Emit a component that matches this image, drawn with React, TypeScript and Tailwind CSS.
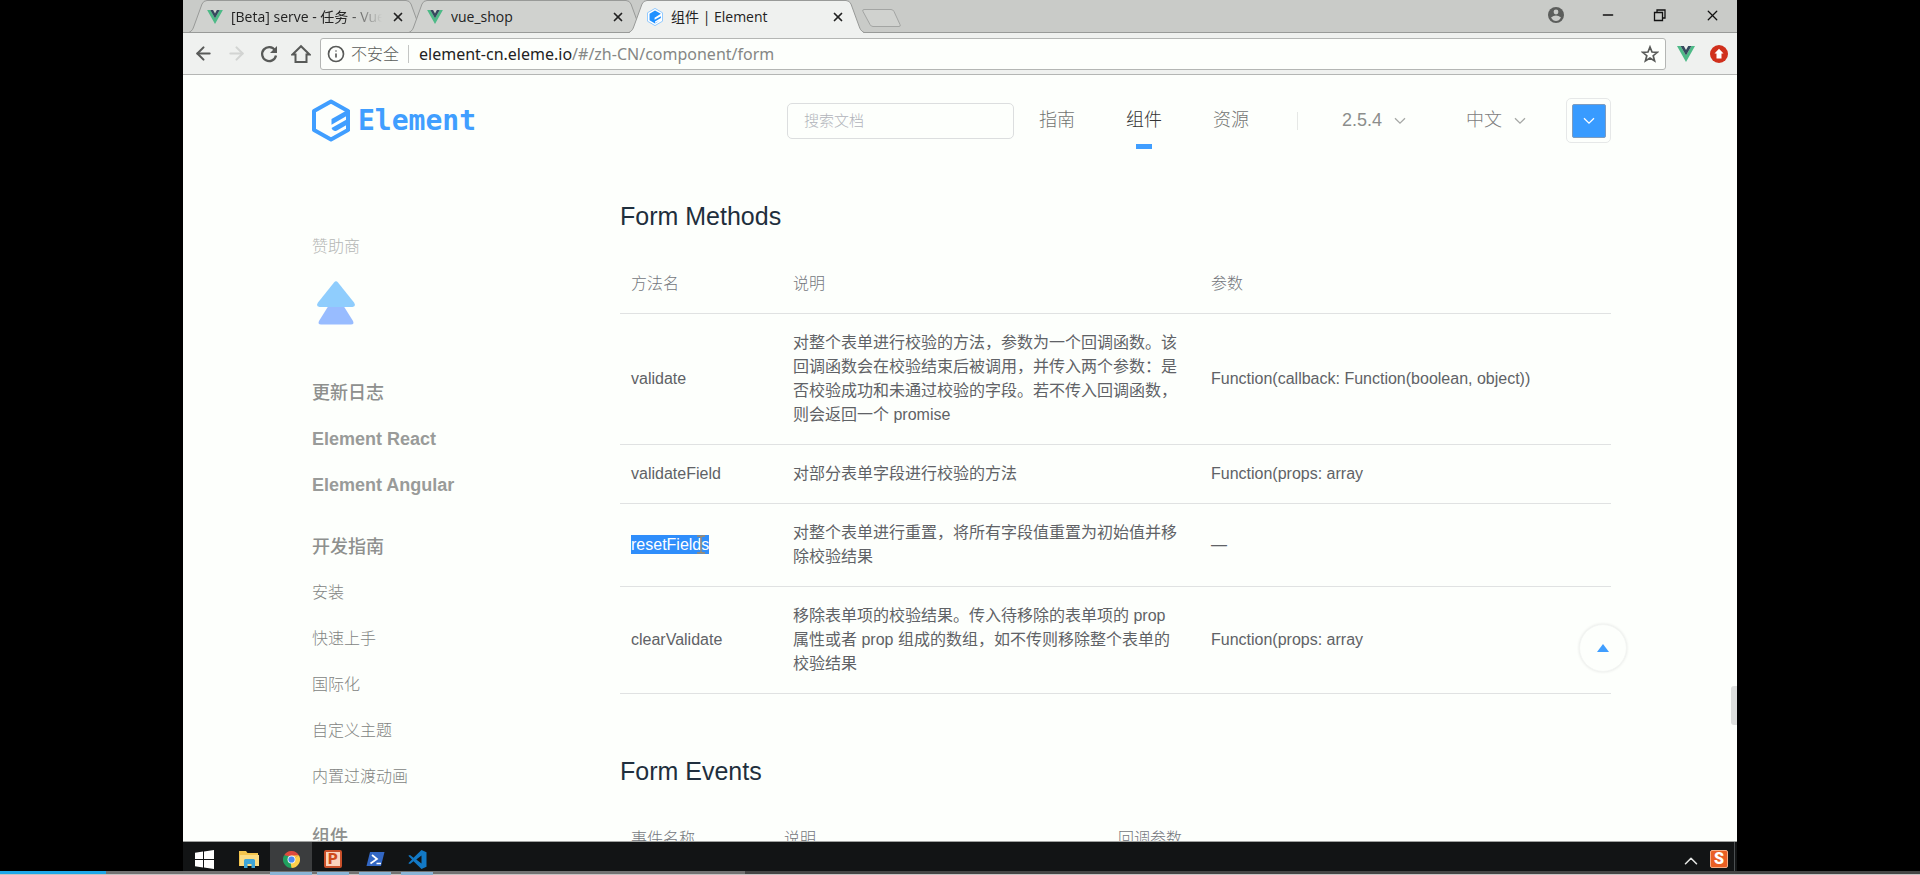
import type { ReactNode } from 'react';
import { ArrowLeft, ArrowRight, ChevronUp, Info, Minus, X } from 'lucide-react';

const UI_FONT = "font-['Open_Sans','Noto_Sans_CJK_SC',sans-serif]";
const PAGE_FONT = "font-['Liberation_Sans','Noto_Sans_CJK_SC',sans-serif]";

function VueIcon({ className }: { className: string }) {
  return (
    <svg viewBox="0 0 18 16" className={className} aria-hidden="true">
      <path d="M0 0h3.6L9 9.4 14.4 0H18L9 16z" fill="#4dba87" />
      <path d="M3.6 0h3.2L9 3.9 11.2 0h3.2L9 9.4z" fill="#35495e" />
    </svg>
  );
}

function Caret({ className }: { className: string }) {
  return (
    <svg viewBox="0 0 12 8" className={`h-2 w-3 ${className}`} fill="none" stroke="currentColor" strokeWidth="1.300" aria-hidden="true">
      <path d="M1 1.200 6 6.200 11 1.200" />
    </svg>
  );
}

function ElementMark({ className }: { className: string }) {
  return (
    <svg viewBox="0 0 38 43" className={className} aria-hidden="true">
      <path fill="none" stroke="#409eff" strokeWidth="4" strokeLinejoin="round" d="M19 2.600 36 12v19L19 40.400 2 31V12z" />
      <path fill="#409eff" d="M19.500 20 35 11.200v5.600L19.500 25.800zM19.500 29 35 20.200v5.600L25 31.500q-4 2-5.500-2.500z" />
      <path fill="#409eff" d="M34 11h4v21h-4z" />
    </svg>
  );
}

function ElementFavicon() {
  return (
    <svg viewBox="0 0 38 43" className="h-[18px] w-4" aria-hidden="true">
      <path d="M19 1 37 11.500v20L19 42 1 31.500v-20z" fill="#fff" stroke="#7cc0ff" strokeWidth="2" />
      <path d="M19 6 33 14 18 23v5l15-8v4l-14 8v4l12-6-12 7L6 29V14z" fill="#1e90ff" />
    </svg>
  );
}

type TabProps = { title: string; icon: ReactNode; active?: boolean; fade?: boolean };

function BrowserTab({ title, icon, active = false, fade = false }: TabProps) {
  return (
    <div className={`relative -mr-[15px] flex h-[33px] w-[235px] shrink items-center pr-[18px] pl-[18px] ${active ? 'z-10' : ''}`}>
      <svg viewBox="0 0 235 33" preserveAspectRatio="none" className="absolute inset-0 h-full w-full" aria-hidden="true">
        <path
          d="M0 32.500 C3 31 4 29 5 26 L13 4 Q14.500 .5 18 .5 H217 Q220.500 .5 222 4 L230 26 C231 29 232 31 235 32.500"
          fill={active ? '#eff1ef' : '#d0d2cf'}
          stroke="#989a98"
        />
        {active ? <path d="M1 32.500H234" stroke="#eff1ef" /> : <path d="M0 32.500H235" stroke="#989a98" />}
      </svg>
      <span className="relative flex w-6 shrink-0 items-center">{icon}</span>
      <button
        type="button"
        className={`relative min-w-0 flex-1 overflow-hidden text-left text-[14px] leading-5 whitespace-nowrap text-[#222] ${fade ? 'mask-r-from-75%' : ''}`}
      >
        {title}
      </button>
      <button type="button" aria-label={`关闭 ${title}`} className="relative ml-2 flex h-4 w-4 shrink-0 items-center justify-center text-[#222]">
        <X size={14} strokeWidth={3} />
      </button>
    </div>
  );
}

function BrowserChrome() {
  return (
    <div className={`shrink-0 ${UI_FONT}`}>
      <div className="flex h-[33px] items-stretch border-b border-[#989a98] bg-[#c9cbc8] pl-[6px]">
        <BrowserTab title="[Beta] serve - 任务 - Vue" icon={<VueIcon className="h-[14px] w-4" />} fade />
        <BrowserTab title="vue_shop" icon={<VueIcon className="h-[14px] w-4" />} />
        <BrowserTab title="组件 | Element" icon={<ElementFavicon />} active />
        <button type="button" aria-label="新标签页" className="ml-[12px] flex items-center">
          <svg viewBox="0 0 41 20" className="mt-1 h-5 w-[41px]" aria-hidden="true">
            <path d="M3 1.500h27q2 0 3 2l6 13q1 2-1 2H12q-2 0-3-2l-7-13q-1-2 1-2z" fill="#d0d2cf" stroke="#a3a5a3" />
          </svg>
        </button>
        <div className="ml-auto flex items-center gap-[36px] pr-4 pb-[2px] text-[#111]">
          <button type="button" aria-label="用户">
            <svg viewBox="0 0 16 16" className="h-4 w-4" aria-hidden="true">
              <circle cx="8" cy="8" r="8" fill="#5c5e5c" />
              <circle cx="8" cy="5" r="2.400" fill="#c9cbc8" />
              <path d="M3 10.500Q8 6.500 13 10.500 11 14 8 14T3 10.500z" fill="#c9cbc8" />
            </svg>
          </button>
          <button type="button" aria-label="最小化"><Minus size={16} strokeWidth={2} /></button>
          <button type="button" aria-label="还原">
            <svg viewBox="0 0 16 16" className="h-4 w-4" fill="none" stroke="currentColor" strokeWidth="1.300" aria-hidden="true">
              <path d="M2.500 5.500h8v8h-8zM5 5V3h8v8h-2" />
            </svg>
          </button>
          <button type="button" aria-label="关闭"><X size={17} strokeWidth={1.800} /></button>
        </div>
      </div>

      <div className="flex h-[42px] items-center border-b border-[#b4b6b4] bg-[#eff1ef] pr-[9px] pl-[10px] text-[#585a58]">
        <div className="flex w-[127px] shrink-0 items-center gap-3">
          <button type="button" aria-label="后退"><ArrowLeft size={21} strokeWidth={2.400} /></button>
          <button type="button" aria-label="前进" className="text-[#d2d4d2]"><ArrowRight size={21} strokeWidth={2.400} /></button>
          <button type="button" aria-label="重新加载">
            <svg viewBox="0 0 20 20" className="h-5 w-5" aria-hidden="true">
              <path d="M16 6.200A7 7 0 1 0 17 11.500" fill="none" stroke="currentColor" strokeWidth="2.300" />
              <path d="M18 2v7h-7z" fill="currentColor" />
            </svg>
          </button>
          <button type="button" aria-label="主页">
            <svg viewBox="0 0 20 20" className="h-5 w-5" fill="none" stroke="currentColor" strokeWidth="2" aria-hidden="true">
              <path d="M1.500 10.500 10 2.200l8.500 8.300H15.500V18h-11v-7.500z" />
            </svg>
          </button>
        </div>
        <div className="flex h-8 flex-1 items-center rounded-[3px] border border-[#b4b6b4] bg-[#fdfffc] px-[6px]">
          <Info size={18} strokeWidth={2.200} />
          <span className="ml-[6px] text-[16px] leading-5 font-light text-[#5a5c5a]">不安全</span>
          <span className="mr-[10px] ml-[9px] h-[18px] w-px bg-[#c4c6c4]" />
          <a href="#/zh-CN/component/form" className="flex-1 font-['Noto_Sans',sans-serif] text-[16px] leading-5 text-[#222]">
            element-cn.eleme.io<span className="text-[#858785]">/#/zh-CN/component/form</span>
          </a>
          <button type="button" aria-label="收藏">
            <svg viewBox="0 0 18 18" className="h-[18px] w-[18px]" fill="none" stroke="currentColor" strokeWidth="1.700" aria-hidden="true">
              <path d="m9 2 2 5 5.400.300-4.200 3.400 1.400 5.200L9 13l-4.600 2.900 1.400-5.200L1.600 7.300 7 7z" />
            </svg>
          </button>
        </div>
        <button type="button" aria-label="Vue.js devtools" className="ml-[11px]"><VueIcon className="h-4 w-[18px]" /></button>
        <button type="button" aria-label="更新" className="ml-[15px]">
          <svg viewBox="0 0 18 18" className="h-[18px] w-[18px]" aria-hidden="true">
            <circle cx="9" cy="9" r="9" fill="#d0301c" />
            <path d="M9 3.800 13.500 8.500h-2v5h-5v-5h-2z" fill="#fff" />
          </svg>
        </button>
      </div>
    </div>
  );
}

function NavLink({ label, active = false }: { label: string; active?: boolean }) {
  return (
    <a
      href="#"
      className={`relative flex h-[91px] items-center text-[18px] font-light ${
        active
          ? "text-[#333] after:absolute after:top-[69px] after:left-1/2 after:h-[5px] after:w-4 after:-translate-x-1/2 after:bg-[#409eff] after:content-['']"
          : 'text-[#717371]'
      }`}
    >
      {label}
    </a>
  );
}

function SiteHeader() {
  return (
    <header className="flex h-[91px] items-center">
      <a href="#" className="flex items-center gap-2">
        <ElementMark className="h-[43px] w-[38px]" />
        <span className="font-['DejaVu_Sans_Mono',monospace] text-[28px] leading-8 font-bold text-[#409eff]">Element</span>
      </a>
      <div className="ml-auto flex items-center">
        <input
          type="search"
          aria-label="搜索文档"
          placeholder="搜索文档"
          className="h-9 w-[227px] rounded-[5px] border border-[#dcdedf] bg-transparent px-4 text-[15px] placeholder:font-light placeholder:text-[#b0b3ba]"
        />
        <nav className="ml-[25px] flex items-center gap-[51px]">
          <NavLink label="指南" />
          <NavLink label="组件" active />
          <NavLink label="资源" />
        </nav>
        <span className="ml-[48px] h-[18px] w-px bg-[#e6e8e6]" />
        <button type="button" className="ml-[44px] flex items-center gap-3 text-[18px] text-[#8c8e8c]">
          2.5.4 <Caret className="text-[#a6a8a6]" />
        </button>
        <button type="button" className="ml-[60px] flex items-center gap-3 text-[18px] font-light text-[#7e807e]">
          中文 <Caret className="text-[#a6a8a6]" />
        </button>
        <button type="button" aria-label="主题颜色" className="ml-10 flex h-[45px] w-[45px] items-center justify-center rounded-[5px] border border-[#e6e8e8]">
          <span className="flex h-[34px] w-[34px] items-center justify-center rounded-[2px] border border-[#7d9cc0] bg-[#389bff]">
            <Caret className="text-white" />
          </span>
        </button>
      </div>
    </header>
  );
}

const guideLinks = ['安装', '快速上手', '国际化', '自定义主题', '内置过渡动画'];

function Sidebar() {
  return (
    <aside className="w-[308px] shrink-0 pt-[69px] text-[#8e908e]">
      <p className="text-[16px] leading-6 font-light text-[#b4b6b4]">赞助商</p>
      <a href="#" aria-label="赞助商" className="mt-[22px] ml-1 block w-10">
        <svg viewBox="0 0 40 44" className="h-11 w-10" aria-hidden="true">
          <path d="M13 24h14l10 16q1.500 3.500-2 3.500H5Q1.500 43.500 3 40z" fill="#98bcff" />
          <path d="M18 1.500q2-2.500 4 0L38 21.500q2.500 4-1.500 4.500h-33Q-.5 25.500 2 21.500z" fill="#8fcdfd" />
        </svg>
      </a>
      <ul className="mt-[45px] text-[18px] leading-[46px]">
        <li><a href="#" className="font-medium">更新日志</a></li>
        <li><a href="#" className="font-bold text-[#999b99]">Element React</a></li>
        <li><a href="#" className="font-bold text-[#999b99]">Element Angular</a></li>
      </ul>
      <h3 className="mt-4 text-[18px] leading-[46px] font-medium">开发指南</h3>
      <ul className="text-[16px] leading-[46px] font-light text-[#828482]">
        {guideLinks.map((label) => (
          <li key={label}><a href="#">{label}</a></li>
        ))}
      </ul>
      <h3 className="mt-[14px] text-[18px] leading-[46px] font-medium">组件</h3>
    </aside>
  );
}

function SelectedName({ name }: { name: string }) {
  return (
    <span className="relative inline-block bg-[#2f8efb] leading-[19px] text-white">
      {name}
      <svg viewBox="0 0 8 19" className="absolute top-0 right-1 h-[19px] w-2" fill="none" stroke="#a98b62" strokeWidth="1.300" aria-hidden="true">
        <path d="M0 1h3l1 1 1-1h3M4 2v15M0 18h3l1-1 1 1h3" />
      </svg>
    </span>
  );
}

const methods = [
  {
    name: 'validate',
    text: '对整个表单进行校验的方法，参数为一个回调函数。该回调函数会在校验结束后被调用，并传入两个参数：是否校验成功和未通过校验的字段。若不传入回调函数，则会返回一个 promise',
    params: 'Function(callback: Function(boolean, object))',
  },
  { name: 'validateField', text: '对部分表单字段进行校验的方法', params: 'Function(props: array' },
  { name: 'resetFields', text: '对整个表单进行重置，将所有字段值重置为初始值并移除校验结果', params: '—', selected: true },
  {
    name: 'clearValidate',
    text: '移除表单项的校验结果。传入待移除的表单项的 prop 属性或者 prop 组成的数组，如不传则移除整个表单的校验结果',
    params: 'Function(props: array',
  },
];

function HeadRow({ labels }: { labels: string[] }) {
  return (
    <thead>
      <tr className="border-b border-[#e0e2e2] text-left text-[#74777c]">
        {labels.map((label) => (
          <th key={label} scope="col" className="py-[17px] pl-[11px] font-light">{label}</th>
        ))}
      </tr>
    </thead>
  );
}

function Docs() {
  return (
    <main className="min-w-0 flex-1 pt-[34px]">
      <h2 className="text-[25px] leading-8 text-[#1f2f3d]">Form Methods</h2>
      <table className="mt-[23px] w-full table-fixed border-collapse text-[16px] leading-6">
        <colgroup>
          <col className="w-[162px]" />
          <col className="w-[418px]" />
          <col />
        </colgroup>
        <HeadRow labels={['方法名', '说明', '参数']} />
        <tbody>
          {methods.map((m) => (
            <tr key={m.name} className="border-b border-[#e0e2e2] text-[#606266]">
              <td className="py-[17px] pl-[11px]">{m.selected ? <SelectedName name={m.name} /> : m.name}</td>
              <td className="py-[17px] pr-5 pl-[11px]">{m.text}</td>
              <td className="py-[17px] pl-[11px]">{m.params}</td>
            </tr>
          ))}
        </tbody>
      </table>
      <h2 className="mt-[61px] text-[25px] leading-8 text-[#1f2f3d]">Form Events</h2>
      <table className="mt-[23px] w-full table-fixed border-collapse text-[16px] leading-6">
        <colgroup>
          <col className="w-[153px]" />
          <col className="w-[334px]" />
          <col />
        </colgroup>
        <HeadRow labels={['事件名称', '说明', '回调参数']} />
      </table>
    </main>
  );
}

function TaskItem({ label, state, children }: { label: string; state: 'idle' | 'running' | 'active'; children: ReactNode }) {
  return (
    <button
      type="button"
      aria-label={label}
      className={`relative flex h-full w-[42px] items-start justify-center pt-2 ${state === 'active' ? 'bg-[#3b3d3e]' : ''}`}
    >
      {children}
      {state !== 'idle' && (
        <span className={`absolute bottom-0 z-20 h-[3px] bg-[#8ab4d6] ${state === 'active' ? 'inset-x-0' : 'inset-x-[5px]'}`} />
      )}
    </button>
  );
}

function Taskbar() {
  return (
    <div className="flex h-[34px] shrink-0 items-stretch border-t border-[#a0a2a0] bg-[#121415]">
      <TaskItem label="开始" state="idle">
        <svg viewBox="0 0 19 19" className="h-[19px] w-[19px]" fill="#fff" aria-hidden="true">
          <path d="M0 2.700 8 1.600V9H0zM9 1.400 19 0v9H9zM0 10h8v7.400L0 16.300zM9 10h10v9L9 17.600z" />
        </svg>
      </TaskItem>
      <div className="flex pl-[3px]">
        <TaskItem label="文件资源管理器" state="idle">
          <svg viewBox="0 0 20 19" className="h-[19px] w-5" aria-hidden="true">
            <path d="M0 1h7l1.500 2H19v13H0z" fill="#f3c44d" />
            <path d="M1 5h19v11H1z" fill="#fbdc83" />
            <path d="M5 18V10.500q0-1.500 1.500-1.500h8q1.500 0 1.500 1.500V18h-3.500v-4h-4v4z" fill="#3fa5d8" />
          </svg>
        </TaskItem>
        <TaskItem label="Google Chrome" state="active">
          <svg viewBox="0 0 18 18" className="mt-px h-[17px] w-[17px]" aria-hidden="true">
            <path d="M9 9 1.200 4.500A9 9 0 0 1 16.800 4.500z" fill="#dd4b3e" />
            <path d="M9 9 16.800 4.500A9 9 0 0 1 9 18z" fill="#fdd04b" />
            <path d="M9 9v9A9 9 0 0 1 1.200 4.500z" fill="#20a05f" />
            <path d="M9 4.500h7.800L9 9zM12.900 11.200 9 18 8 12z" fill="#fdd04b" />
            <path d="M1.200 4.500 5.100 11.200 9 6z" fill="#20a05f" />
            <path d="M9 4.800h7.900L9 4.200z" fill="#dd4b3e" />
            <circle cx="9" cy="9" r="4.200" fill="#f4f4f4" />
            <circle cx="9" cy="9" r="3.300" fill="#4a8af4" />
          </svg>
        </TaskItem>
        <TaskItem label="PowerPoint" state="running">
          <span className="flex h-[18px] w-[18px] items-center justify-center rounded-[2px] border-2 border-[#c9502a] bg-[#fbd3bd] font-['Roboto',sans-serif] text-[15px] leading-4 font-black text-[#cf4a1b]">P</span>
        </TaskItem>
        <TaskItem label="PowerShell" state="running">
          <svg viewBox="0 0 19 16" className="mt-px h-4 w-[19px]" aria-hidden="true">
            <path d="M4 1h14.500L15 15H.5z" fill="#3267c4" />
            <path d="m6 4 5 4-6.500 4.500M10.500 12.500h4.500" fill="none" stroke="#fff" strokeWidth="1.700" />
          </svg>
        </TaskItem>
        <TaskItem label="Visual Studio Code" state="running">
          <svg viewBox="0 0 19 19" className="h-[19px] w-[19px]" aria-hidden="true">
            <path d="m13.500 0 5 2.200v14.600l-5 2.200L5.500 11.300 2 14 .3 13.200 4 9.500.3 5.800 2 5l3.500 2.700zM13.500 5.500l-5.200 4 5.200 4z" fill="#1279c6" fillRule="evenodd" />
          </svg>
        </TaskItem>
      </div>
      <div className="mr-[2px] ml-auto flex items-start gap-2 border-r border-[#4c5052] pt-2 pr-[6px]">
        <button type="button" aria-label="显示隐藏的图标" className="text-[#e4e6e4]">
          <ChevronUp size={22} strokeWidth={1.700} />
        </button>
        <button
          type="button"
          aria-label="输入法"
          className="flex h-[18px] w-[18px] items-center justify-center rounded-[2px] border border-[#f4ab84] bg-[#ea5f24] font-['Roboto',sans-serif] text-[16px] leading-4 font-black text-white"
        >
          S
        </button>
      </div>
    </div>
  );
}

export default function App() {
  return (
    <div className="relative h-screen overflow-hidden bg-black px-[183px]">
      <div className="flex h-full flex-col">
        <BrowserChrome />
        <div className={`relative min-h-0 flex-1 overflow-hidden bg-[#fdfffc] pr-[126px] pl-[129px] ${PAGE_FONT}`}>
          <SiteHeader />
          <div className="flex">
            <Sidebar />
            <Docs />
          </div>
          <button
            type="button"
            aria-label="回到顶部"
            className="absolute right-[110px] bottom-[169px] flex h-12 w-12 items-center justify-center rounded-full border border-[#f3f5f3] bg-[#fdfffc] shadow-[0_0_3px_rgba(0,0,0,0.1)]"
          >
            <svg viewBox="0 0 12 8" className="h-2 w-3" aria-hidden="true"><path d="M6 0l6 8H0z" fill="#409eff" /></svg>
          </button>
          <span className="absolute right-0 bottom-[116px] h-[39px] w-[6px] rounded-l-[3px] bg-[#dcdedd]" />
        </div>
        <Taskbar />
      </div>
      <div role="progressbar" aria-label="播放进度" aria-valuenow={6} className="absolute inset-x-0 bottom-0 z-10 flex h-1 border-b border-[#c8c2c2]">
        <span className="w-[5.500%] bg-[#1ea7e8]" />
        <span className="w-[33.300%] bg-[#727272]" />
        <span className="flex-1 bg-[#454545]" />
      </div>
    </div>
  );
}
